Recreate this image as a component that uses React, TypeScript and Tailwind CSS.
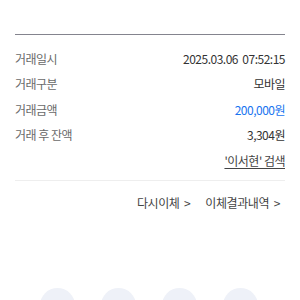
const rows = [
  { label: "거래일시", value: "2025.03.06\u00a0\u00a007:52:15", blue: false },
  { label: "거래구분", value: "모바일", blue: false },
  { label: "거래금액", value: "200,000원", blue: true },
  { label: "거래 후 잔액", value: "3,304원", blue: false },
]

export default function App() {
  return (
    <div
      className="w-[300px] h-[300px] overflow-hidden bg-white"
      style={{ fontFamily: '"Noto Sans CJK KR", "Noto Sans", sans-serif' }}
    >
      <div className="px-[15px] pt-[34px]">
        <div className="h-[1px] bg-[#84848e]" />
        <div className="pt-[11px] flex flex-col">
          {rows.map((r) => (
            <div key={r.label} className="flex justify-between items-center h-[25.5px] text-[12px] tracking-[-0.5px]">
              <span className="text-[#6a6a6a]">{r.label}</span>
              <span className={r.blue ? "text-[#1874f0]" : "text-[#333]"}>{r.value}</span>
            </div>
          ))}
          <div className="flex justify-end items-center h-[25px] text-[12px] tracking-[-0.5px]">
            <span className="text-[#444] underline underline-offset-2">'이서현' 검색</span>
          </div>
        </div>
        <div className="mt-[7px] h-[1px] bg-[#eeeeee]" />
        <div className="flex justify-end gap-[15px] pt-[13px] pr-[5px] text-[12px] text-[#444] tracking-[-0.4px]">
          <span>다시이체&nbsp;&nbsp;&gt;</span>
          <span>이체결과내역&nbsp;&nbsp;&gt;</span>
        </div>
        <div className="flex pl-[25px] gap-[26px] pt-[76px]">
          <div className="w-[35px] h-[35px] rounded-full bg-[#eef1f8]" />
          <div className="w-[35px] h-[35px] rounded-full bg-[#eef1f8]" />
          <div className="w-[35px] h-[35px] rounded-full bg-[#eef1f8]" />
          <div className="w-[35px] h-[35px] rounded-full bg-[#eef1f8]" />
        </div>
      </div>
    </div>
  )
}
